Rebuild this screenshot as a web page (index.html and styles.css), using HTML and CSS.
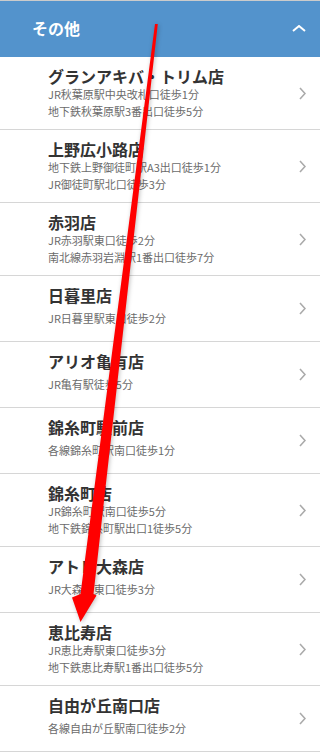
FILE: index.html
```html
<!DOCTYPE html>
<html lang="ja">
<head>
<meta charset="utf-8">
<title>その他</title>
<link rel="stylesheet" href="styles.css">
</head>
<body>
<div class="page">
  <header class="sec-head">
    <span class="sec-title">その他</span>
    <svg class="chev-up" viewBox="0 0 14 7"><path d="M1 6 L7 1 L13 6" fill="none" stroke="#fff" stroke-width="2"/></svg>
  </header>
  <ul class="shops">
    <li class="shop">
      <div class="info"><div class="name">グランアキバ・トリム店</div><div class="access"><span>JR秋葉原駅中央改札口徒歩1分</span><span>地下鉄秋葉原駅3番出口徒歩5分</span></div></div>
      <svg class="chev" viewBox="0 0 7 13"><path d="M1 1 L6 6.5 L1 12" fill="none" stroke="#aaa" stroke-width="1.6"/></svg>
    </li>
    <li class="shop">
      <div class="info"><div class="name">上野広小路店</div><div class="access"><span>地下鉄上野御徒町駅A3出口徒歩1分</span><span>JR御徒町駅北口徒歩3分</span></div></div>
      <svg class="chev" viewBox="0 0 7 13"><path d="M1 1 L6 6.5 L1 12" fill="none" stroke="#aaa" stroke-width="1.6"/></svg>
    </li>
    <li class="shop">
      <div class="info"><div class="name">赤羽店</div><div class="access"><span>JR赤羽駅東口徒歩2分</span><span>南北線赤羽岩淵駅1番出口徒歩7分</span></div></div>
      <svg class="chev" viewBox="0 0 7 13"><path d="M1 1 L6 6.5 L1 12" fill="none" stroke="#aaa" stroke-width="1.6"/></svg>
    </li>
    <li class="shop">
      <div class="info"><div class="name">日暮里店</div><div class="access"><span>JR日暮里駅東口徒歩2分</span></div></div>
      <svg class="chev" viewBox="0 0 7 13"><path d="M1 1 L6 6.5 L1 12" fill="none" stroke="#aaa" stroke-width="1.6"/></svg>
    </li>
    <li class="shop">
      <div class="info"><div class="name">アリオ亀有店</div><div class="access"><span>JR亀有駅徒歩5分</span></div></div>
      <svg class="chev" viewBox="0 0 7 13"><path d="M1 1 L6 6.5 L1 12" fill="none" stroke="#aaa" stroke-width="1.6"/></svg>
    </li>
    <li class="shop">
      <div class="info"><div class="name">錦糸町駅前店</div><div class="access"><span>各線錦糸町駅南口徒歩1分</span></div></div>
      <svg class="chev" viewBox="0 0 7 13"><path d="M1 1 L6 6.5 L1 12" fill="none" stroke="#aaa" stroke-width="1.6"/></svg>
    </li>
    <li class="shop">
      <div class="info"><div class="name">錦糸町店</div><div class="access"><span>JR錦糸町駅南口徒歩5分</span><span>地下鉄錦糸町駅出口1徒歩5分</span></div></div>
      <svg class="chev" viewBox="0 0 7 13"><path d="M1 1 L6 6.5 L1 12" fill="none" stroke="#aaa" stroke-width="1.6"/></svg>
    </li>
    <li class="shop">
      <div class="info"><div class="name">アトレ大森店</div><div class="access"><span>JR大森駅東口徒歩3分</span></div></div>
      <svg class="chev" viewBox="0 0 7 13"><path d="M1 1 L6 6.5 L1 12" fill="none" stroke="#aaa" stroke-width="1.6"/></svg>
    </li>
    <li class="shop">
      <div class="info"><div class="name">恵比寿店</div><div class="access"><span>JR恵比寿駅東口徒歩3分</span><span>地下鉄恵比寿駅1番出口徒歩5分</span></div></div>
      <svg class="chev" viewBox="0 0 7 13"><path d="M1 1 L6 6.5 L1 12" fill="none" stroke="#aaa" stroke-width="1.6"/></svg>
    </li>
    <li class="shop">
      <div class="info"><div class="name">自由が丘南口店</div><div class="access"><span>各線自由が丘駅南口徒歩2分</span></div></div>
      <svg class="chev" viewBox="0 0 7 13"><path d="M1 1 L6 6.5 L1 12" fill="none" stroke="#aaa" stroke-width="1.6"/></svg>
    </li>
  </ul>
  <svg class="arrow" viewBox="0 0 320 756">
    <polygon points="155,24 157.8,24 93.5,594 96.5,595.5 80.5,622 72,597.5 80.5,594" fill="#ff0000"/>
  </svg>
</div>
</body>
</html>
```

FILE: styles.css
```css
html, body {
  margin: 0;
  padding: 0;
  background: #fff;
}
body {
  font-family: "Noto Sans CJK JP", "Noto Sans", sans-serif;
}
.page {
  position: relative;
  width: 320px;
  height: 756px;
  overflow: hidden;
}
.sec-head {
  box-sizing: border-box;
  height: 57px;
  border-top: 1px solid #cbcbcb;
  background: #5393cc;
  display: flex;
  align-items: center;
  justify-content: space-between;
  padding: 0 14px 0 32px;
}
.sec-title {
  color: #fff;
  font-weight: bold;
  font-size: 16px;
  line-height: 20px;
  margin-top: -2px;
}
.chev-up {
  width: 14px;
  height: 7px;
  margin-top: -2px;
}
.shops {
  list-style: none;
  margin: 0;
  padding: 0;
}
.shop {
  box-sizing: border-box;
  display: flex;
  align-items: center;
  min-height: 66px;
  border-bottom: 1px solid #d6d6d6;
  padding: 0 14px 0 48px;
}
.info {
  flex: 1;
  align-self: stretch;
  display: flex;
  flex-direction: column;
  padding: 10px 0 9px;
}
.name {
  font-size: 16px;
  font-weight: bold;
  line-height: 19px;
  color: #333;
}
.access {
  flex: 1;
  display: flex;
  flex-direction: column;
  justify-content: center;
  font-size: 11px;
  line-height: 17px;
  color: #6b6b6b;
}
.chev {
  width: 7px;
  height: 13px;
  flex: none;
}
.arrow {
  position: absolute;
  top: 0;
  left: 0;
  width: 320px;
  height: 756px;
  pointer-events: none;
  filter: drop-shadow(1px 1px 2px rgba(0, 0, 0, 0.25));
}
```
